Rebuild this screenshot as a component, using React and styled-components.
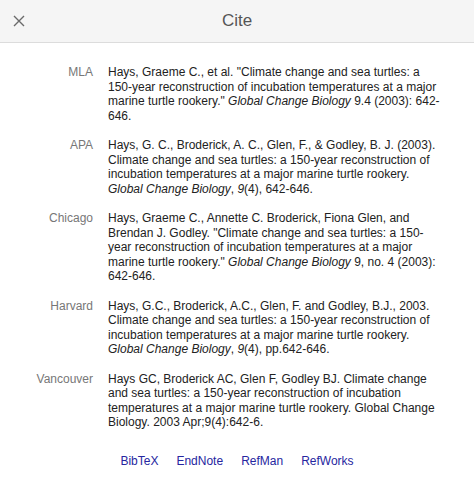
import React from "react";
import styled, { createGlobalStyle } from "styled-components";

const GlobalStyle = createGlobalStyle`
  body {
    margin: 0;
    background: #fff;
    font-family: "Liberation Sans", Arial, sans-serif;
  }
`;

const CITATIONS = [
  {
    style: "MLA",
    text: (
      <>
        Hays, Graeme C., et al. "Climate change and sea turtles: a 150-year
        reconstruction of incubation temperatures at a major marine turtle
        rookery." <i>Global Change Biology</i> 9.4 (2003): 642-646.
      </>
    ),
  },
  {
    style: "APA",
    text: (
      <>
        Hays, G. C., Broderick, A. C., Glen, F., &amp; Godley, B. J. (2003).
        Climate change and sea turtles: a 150-year reconstruction of incubation
        temperatures at a major marine turtle rookery.{" "}
        <i>Global Change Biology</i>, <i>9</i>(4), 642-646.
      </>
    ),
  },
  {
    style: "Chicago",
    text: (
      <>
        Hays, Graeme C., Annette C. Broderick, Fiona Glen, and Brendan J.
        Godley. "Climate change and sea turtles: a 150-year reconstruction of
        incubation temperatures at a major marine turtle rookery."{" "}
        <i>Global Change Biology</i> 9, no. 4 (2003): 642-646.
      </>
    ),
  },
  {
    style: "Harvard",
    text: (
      <>
        Hays, G.C., Broderick, A.C., Glen, F. and Godley, B.J., 2003. Climate
        change and sea turtles: a 150-year reconstruction of incubation
        temperatures at a major marine turtle rookery.{" "}
        <i>Global Change Biology</i>, <i>9</i>(4), pp.642-646.
      </>
    ),
  },
  {
    style: "Vancouver",
    text: (
      <>
        Hays GC, Broderick AC, Glen F, Godley BJ. Climate change and sea
        turtles: a 150-year reconstruction of incubation temperatures at a
        major marine turtle rookery. Global Change Biology. 2003
        Apr;9(4):642-6.
      </>
    ),
  },
];

const EXPORTS = ["BibTeX", "EndNote", "RefMan", "RefWorks"];

const Dialog = styled.div`
  width: 474px;
  min-height: 488px;
  background: #fff;
`;

const Header = styled.header`
  position: relative;
  height: 42px;
  background: #f5f5f5;
  border-bottom: 1px solid #dcdcdc;
  display: flex;
  align-items: center;
  justify-content: center;
`;

const CloseButton = styled.button`
  position: absolute;
  left: 11px;
  top: 13px;
  width: 16px;
  height: 16px;
  padding: 0;
  border: 0;
  background: none;
  color: #6a6a6a;
  display: flex;
  align-items: center;
  justify-content: center;
`;

const Title = styled.h1`
  margin: 0;
  font-size: 17px;
  font-weight: normal;
  color: #555;
`;

const Table = styled.div`
  display: grid;
  grid-template-columns: 93px 336px;
  column-gap: 15px;
  row-gap: 15px;
  padding: 22px 0 0 0;
  font-size: 12px;
  line-height: 14.5px;
`;

const Label = styled.div`
  text-align: right;
  color: #777;
`;

const Citation = styled.div`
  color: #222;
`;

const Links = styled.div`
  display: flex;
  justify-content: center;
  gap: 18px;
  margin-top: 24px;
  font-size: 12px;
  line-height: 14.5px;
`;

const Link = styled.a`
  color: #2626a0;
  text-decoration: none;
  cursor: pointer;
`;

const CloseIcon = () => (
  <svg width="12" height="12" viewBox="0 0 12 12">
    <path
      d="M1 1 L11 11 M11 1 L1 11"
      stroke="currentColor"
      strokeWidth="1.4"
      fill="none"
    />
  </svg>
);

const App = () => {
  return (
    <Dialog>
      <GlobalStyle />
      <Header>
        <CloseButton aria-label="Close">
          <CloseIcon />
        </CloseButton>
        <Title>Cite</Title>
      </Header>
      <Table>
        {CITATIONS.map((c) => (
          <React.Fragment key={c.style}>
            <Label>{c.style}</Label>
            <Citation>{c.text}</Citation>
          </React.Fragment>
        ))}
      </Table>
      <Links>
        {EXPORTS.map((name) => (
          <Link key={name}>{name}</Link>
        ))}
      </Links>
    </Dialog>
  );
};

export default App;
